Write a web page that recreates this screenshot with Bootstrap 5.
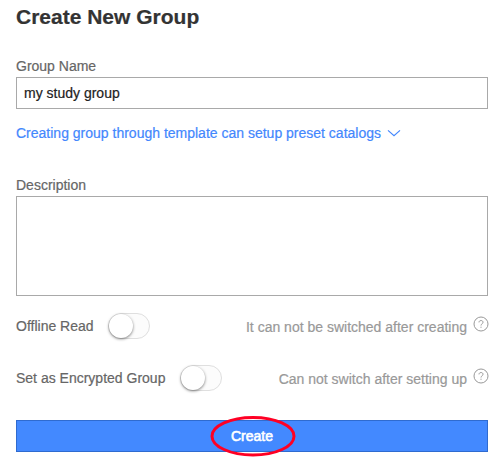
<!DOCTYPE html>
<html lang="en">
<head>
<meta charset="utf-8">
<meta name="viewport" content="width=device-width, initial-scale=1">
<title>Create New Group</title>
<link href="https://cdn.jsdelivr.net/npm/bootstrap@5.3.0/dist/css/bootstrap.min.css" rel="stylesheet">
<style>
  body { font: 14px/20px "Liberation Sans", Arial, sans-serif; color: #666; background: #fff; -webkit-text-stroke: .2px; padding: 5px 0 0 16px; }
  .group-form { width: 472px; }
  .form-title { font-size: 21px; line-height: 24px; font-weight: 700; color: #333; margin-bottom: 27px; }
  .form-label { margin-bottom: 1px; line-height: 20px; display: block; }
  .form-control { border: 1px solid #a9a9a9; border-radius: 0; font-size: 14px; line-height: 20px; color: #222; padding: 5px 7px; }
  .form-control.name-field { height: 32px; margin-bottom: 14px; }
  .form-control.desc-field { height: 100px; resize: none; margin-bottom: 17px; }
  .template-link { color: #4387fd; gap: 6px; margin-bottom: 32px; }
  .option-row { height: 26px; }
  .option-row + .option-row { margin: 26px 0 29px; }
  .switch-toggle.form-check-input { width: 42px; height: 26px; margin: 0 0 0 14.5px; padding: 0; border: 1px solid #dfdfdf; border-radius: 13px; background: #fcfcfc; }
  .switch-toggle::before { content: ""; display: block; width: 24px; height: 24px; border-radius: 50%; background: #fff; box-shadow: 0 1px 3px rgba(0,0,0,.5); }
  .hint-text { color: #999; padding-top: 2px; }
  .help-icon { margin: 0 -1px 4px 6px; }
  .btn-create { height: 32px; padding: 5px 0; border: 1px solid #2f6bd0; border-radius: 0; background: #4389ff; color: #fff; font-size: 14px; line-height: 20px; -webkit-text-stroke: .6px; }
  .btn-create:hover { background: #3479ee; color: #fff; }
  .focus-oval { position: absolute; left: 194px; top: -5px; pointer-events: none; }
</style>
</head>
<body class="min-vh-100">
<form class="group-form">
  <h1 class="form-title">Create New Group</h1>
  <label class="form-label" for="groupName">Group Name</label>
  <input class="form-control name-field" id="groupName" type="text" value="my study group">
  <a class="template-link d-flex align-items-center text-decoration-none" href="#">Creating group through template can setup preset catalogs
    <svg width="14" height="8" viewBox="0 0 14 8" fill="none" stroke="currentColor" stroke-width="1.2"><path d="M1 1.4 7 6.6 13 1.4"/></svg>
  </a>
  <label class="form-label" for="description">Description</label>
  <textarea class="form-control desc-field" id="description"></textarea>
  <div class="option-row d-flex align-items-center">
    <label for="offlineRead">Offline Read</label>
    <input class="form-check-input switch-toggle" type="checkbox" id="offlineRead">
    <span class="hint-text ms-auto">It can not be switched after creating</span>
    <svg class="help-icon" width="16" height="16" viewBox="0 0 16 16" fill="none" stroke="#999"><circle cx="8" cy="8" r="7"/><path d="M6 6.4C6 3.9 10 3.9 10 6.3 10 7.8 8 7.8 8 9.5M8 10.7v1.1"/></svg>
  </div>
  <div class="option-row d-flex align-items-center">
    <label for="encrypted">Set as Encrypted Group</label>
    <input class="form-check-input switch-toggle" type="checkbox" id="encrypted">
    <span class="hint-text ms-auto">Can not switch after setting up</span>
    <svg class="help-icon" width="16" height="16" viewBox="0 0 16 16" fill="none" stroke="#999"><circle cx="8" cy="8" r="7"/><path d="M6 6.4C6 3.9 10 3.9 10 6.3 10 7.8 8 7.8 8 9.5M8 10.7v1.1"/></svg>
  </div>
  <div class="position-relative">
    <button class="btn btn-create w-100 d-block" type="button">Create</button>
    <svg class="focus-oval" width="86" height="42" viewBox="0 0 86 42" fill="none" stroke="#ff0024" stroke-width="3"><ellipse cx="43" cy="21.2" rx="41" ry="18.8"/></svg>
  </div>
</form>
<script src="https://cdn.jsdelivr.net/npm/bootstrap@5.3.0/dist/js/bootstrap.bundle.min.js"></script>
</body>
</html>
